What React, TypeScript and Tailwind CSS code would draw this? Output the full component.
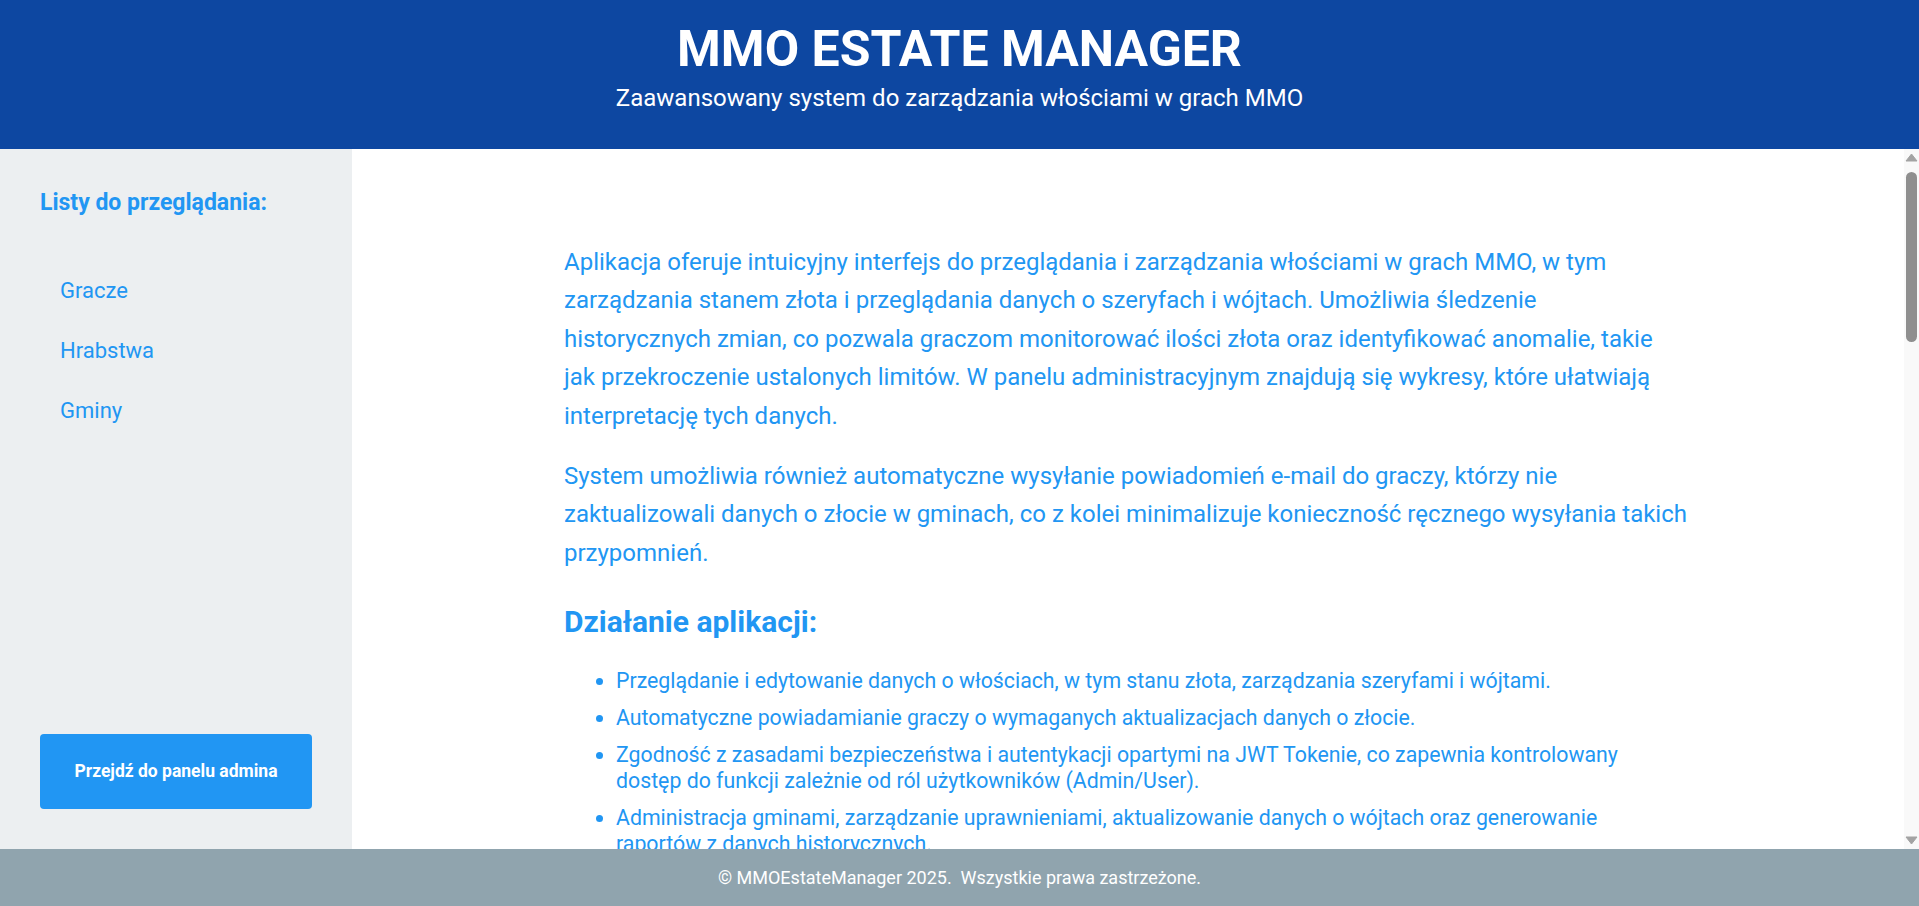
import React from "react";

const FEATURES = [
  "Przeglądanie i edytowanie danych o włościach, w tym stanu złota, zarządzania szeryfami i wójtami.",
  "Automatyczne powiadamianie graczy o wymaganych aktualizacjach danych o złocie.",
  "Zgodność z zasadami bezpieczeństwa i autentykacji opartymi na JWT Tokenie, co zapewnia kontrolowany dostęp do funkcji zależnie od ról użytkowników (Admin/User).",
  "Administracja gminami, zarządzanie uprawnieniami, aktualizowanie danych o wójtach oraz generowanie raportów z danych historycznych.",
];

const TECH = [
  "Backend oparty na ASP.NET Core Web API z bazą danych SQL Server.",
  "Frontend zbudowany w React z wykorzystaniem Material UI.",
  "Wykresy historyczne generowane na podstawie zapisanych zmian stanu złota.",
];

const LISTS = ["Gracze", "Hrabstwa", "Gminy"];

function ScrollArrow({ down = false }: { down?: boolean }) {
  return (
    <div className="h-[17px] flex items-center justify-center">
      <svg width="13" height="9" viewBox="0 0 13 9" className={down ? "rotate-180" : ""}>
        <path d="M6.5 1 L12 8 L1 8 Z" fill="#a3a3a3" stroke="#a3a3a3" strokeLinejoin="round" strokeWidth="1" />
      </svg>
    </div>
  );
}

export default function App() {
  return (
    <div className="h-screen flex flex-col font-['Roboto',sans-serif] overflow-hidden">
      <header className="h-[149px] shrink-0 bg-[#0d47a1] text-white text-center pt-[20px]">
        <h1 className="text-[50px] leading-[58px] font-bold">MMO ESTATE MANAGER</h1>
        <p className="mt-[6px] text-[24px] leading-[28px]">
          Zaawansowany system do zarządzania włościami w grach MMO
        </p>
      </header>

      <div className="flex-1 flex min-h-0">
        <aside className="w-[352px] shrink-0 bg-[#eceff1] p-10 flex flex-col">
          <h3 className="text-[23px] leading-[27px] font-bold text-[#2196f3]">
            Listy do przeglądania:
          </h3>
          <ul className="mt-[44px]">
            {LISTS.map((item) => (
              <li key={item}>
                <a className="h-[60px] flex items-center pl-5 text-[22px] text-[#2196f3] cursor-pointer">
                  {item}
                </a>
              </li>
            ))}
          </ul>
          <button className="mt-auto h-[75px] w-full rounded bg-[#2196f3] text-white text-[17.5px] font-bold">
            Przejdź do panelu admina
          </button>
        </aside>

        <main className="flex-1 overflow-y-auto bg-white">
          <div className="w-[1128px] pr-[3px] mx-auto pt-[94px] pb-20 text-[#2196f3]">
            <p className="text-[24px] leading-[38.4px]">
              Aplikacja oferuje intuicyjny interfejs do przeglądania i zarządzania włościami w grach MMO, w tym
              zarządzania stanem złota i przeglądania danych o szeryfach i wójtach. Umożliwia śledzenie
              historycznych zmian, co pozwala graczom monitorować ilości złota oraz identyfikować anomalie, takie
              jak przekroczenie ustalonych limitów. W panelu administracyjnym znajdują się wykresy, które ułatwiają
              interpretację tych danych.
            </p>
            <p className="mt-[22px] text-[24px] leading-[38.4px]">
              System umożliwia również automatyczne wysyłanie powiadomień e-mail do graczy, którzy nie
              zaktualizowali danych o złocie w gminach, co z kolei minimalizuje konieczność ręcznego wysyłania
              takich przypomnień.
            </p>

            <h2 className="mt-[32px] text-[30px] leading-[36px] font-bold">Działanie aplikacji:</h2>
            <ul className="mt-[28px] pl-[52px] pr-[30px] list-disc">
              {FEATURES.map((f) => (
                <li key={f} className="mb-[11px] text-[21.3px] leading-[26px]">
                  {f}
                </li>
              ))}
            </ul>

            <h2 className="mt-[30px] text-[30px] leading-[36px] font-bold">Technologie:</h2>
            <ul className="mt-[28px] pl-[52px] pr-[30px] list-disc">
              {TECH.map((t) => (
                <li key={t} className="mb-[11px] text-[21.3px] leading-[26px]">
                  {t}
                </li>
              ))}
            </ul>
          </div>
        </main>

        {/* scrollbar of the content pane */}
        <div className="w-[15px] shrink-0 bg-[#f9f9f9] flex flex-col">
          <ScrollArrow />
          <div className="flex-1 pt-[6px]">
            <div className="mx-auto w-[11px] h-[170px] rounded-full bg-[#8f8f8f]" />
          </div>
          <ScrollArrow down />
        </div>
      </div>

      <footer className="h-[57px] shrink-0 bg-[#90a4ae] text-white text-[18px] flex items-center justify-center">
        © MMOEstateManager 2025.{"\u00a0 "}Wszystkie prawa zastrzeżone.
      </footer>
    </div>
  );
}
